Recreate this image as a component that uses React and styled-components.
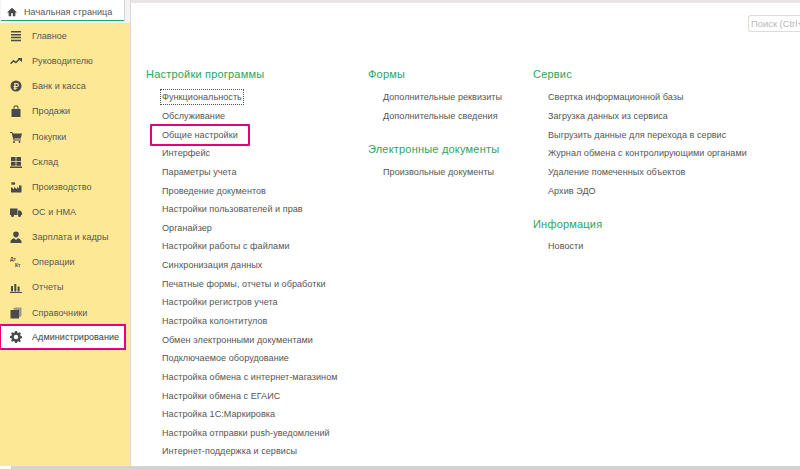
import React from "react";
import styled, { createGlobalStyle } from "styled-components";

const Global = createGlobalStyle`
  html, body { margin: 0; padding: 0; background: #fff; }
  body { width: 800px; height: 469px; overflow: hidden; font-family: "Liberation Sans", Arial, sans-serif; }
`;
const Page = styled.div`
  width: 800px; height: 469px; display: flex; flex-direction: column; overflow: hidden; background: #fff;
`;
const Body = styled.div`
  flex: 1; display: flex; min-height: 0;
`;
const LeftColumn = styled.div`
  width: 130px; flex: none; display: flex; flex-direction: column; border-right: 1px solid #d8d8d8;
`;
const TabBar = styled.div`
  height: 22.5px; flex: none; display: flex; background: #f3f3f3;
`;
const Tab = styled.div`
  width: 123px; height: 21px; box-sizing: border-box; flex: none; display: flex; align-items: center; gap: 7px; padding: 3px 0 0 6px;
  background: #fff; border-bottom: 1.5px solid #2fa55f; box-shadow: 1px 0 0 #d6d6d6; margin-left: 1px;
  font-size: 9.05px; letter-spacing: 0.05px; color: #555; white-space: nowrap;
`;
const Sidebar = styled.nav`
  flex: 1; background: #fde995; padding-top: 1px;
`;
const NavItem = styled.div`
  height: 25.15px; box-sizing: border-box; display: flex; align-items: center; padding-left: 10px; gap: 10px;
  font-size: 9.05px; letter-spacing: 0.05px; color: #555; white-space: nowrap;
  ${(p) => p.$active && `
    width: 125px; height: 23.5px; padding-top: 1px; margin-bottom: 2px; background: #fff; outline: 2px solid #e5007a; outline-offset: -1px; color: #3c3c3c;
  `}
`;
const IconBox = styled.svg`
  width: ${(p) => p.$size || 12}px; height: ${(p) => p.$size || 12}px; flex: none; fill: #4a4a4a;
`;
const Main = styled.main`
  flex: 1; min-width: 0; display: flex; flex-direction: column; border-top: 3px solid #e9e4e8;
`;
const SearchRow = styled.div`
  display: flex; justify-content: flex-end; padding-top: 12px; height: 17px; flex: none;
`;
const Search = styled.div`
  width: 52px; height: 17px; box-sizing: border-box; border: 1px solid #dcdcdc; border-right: none; border-radius: 3px 0 0 3px; padding-left: 2px;
  font-size: 9.4px; line-height: 15px; color: #b8b8b8; white-space: nowrap;
`;
const Columns = styled.div`
  display: flex; padding: 34px 0 0 15px;
`;
const Column = styled.section`
  width: ${(p) => p.$w}px; flex: none;
`;
const Heading = styled.h2`
  margin: ${(p) => p.$gap || 0}px 0 ${(p) => (p.$gap ? 5 : 6)}px; height: 16px; font-size: 11px; line-height: 16px; font-weight: 400; letter-spacing: 0.2px; color: #2ba45f; white-space: nowrap;
`;
const Links = styled.div`
  padding-left: ${(p) => p.$indent}px;
`;
const LinkRow = styled.div`
  height: 18.65px; display: flex; align-items: center;
`;
const LinkText = styled.span`
  font-size: 9.05px; line-height: 12px; letter-spacing: 0.05px; color: #555; white-space: nowrap;
  ${(p) => p.$focus && `outline: 1px dotted #555; outline-offset: 1px;`}
  ${(p) => p.$marked && `
    position: relative;
    &::after { content: ""; position: absolute; left: -12px; right: -12px; top: -5px; bottom: -5px; border: 2px solid #e5007a; border-radius: 1px; }
  `}
`;
const BottomBar = styled.div`
  height: 3px; flex: none; background: #d3d3d3; margin-left: 11px;
`;

const Icons = {
  home: <path d="M6 1 0 6.500h2V11h3V7.500h2V11h3V6.500h2z" />,
  menu: <path d="M1 1h10v1.500H1zM1 3.900h10v1.500H1zM1 6.800h10v1.500H1zM1 9.700h10v1.500H1z" />,
  trend: <g><path d="M.5 8.800 3.600 5.800l2.300 1.700 3.600-3.500" fill="none" stroke="#4a4a4a" strokeWidth="1.500" /><path d="M7.500 3H12v4.200z" /></g>,
  coin: <path fillRule="evenodd" d="M6 .5a5.500 5.500 0 1 0 0 11 5.500 5.500 0 0 0 0-11zM4.300 3h2.600a2 2 0 0 1 0 4H5.600v.8h1.600v1H5.600V10H4.300V8.800h-.8v-1h.8V7h-.8V6h.8zm1.300 1.100V6h1.200a.95.95 0 0 0 0-1.900z" />,
  bag: <path fillRule="evenodd" d="M1.500 4H3.500V2.800a2.500 2.500 0 0 1 5 0V4h2v8h-9zM4.500 4h3V2.800a1.500 1.500 0 0 0-3 0z" />,
  cart: <path d="M0 1h2.300l.6 1.500H12l-1.300 5H4.200l.3 1h6.300v1H3.600L1.600 2H0zM4 10a1 1 0 1 1 0 2 1 1 0 0 1 0-2zM9.500 10a1 1 0 1 1 0 2 1 1 0 0 1 0-2z" />,
  stock: <path d="M1 1h4.600v4H1zM6.400 1H11v4H6.400zM1 5.800h4.600v4H1zM6.400 5.800H11v4H6.400zM0 10.500h12V12H0z" />,
  factory: <path d="M1 11.500V6l3 2.200V6l3 2.200V6l2 1.500V4.500h2.500v7zM1.500 1l2 .5.800-.5 1 1.500-1 1.500-1.500-.5-1.300.5z" />,
  truck: <path d="M0 2.500h7.500v6.500H0zM8 4.500h2.300L12 6.500V9H8zM2.500 8a1.500 1.500 0 1 1 0 3 1.500 1.500 0 0 1 0-3zM9.500 8a1.500 1.500 0 1 1 0 3 1.500 1.500 0 0 1 0-3z" />,
  person: <path d="M6 .5a2.800 2.800 0 0 1 2.800 3c0 1.500-1.200 3-2.800 3s-2.800-1.500-2.800-3A2.800 2.800 0 0 1 6 .5zM.5 12V10.500c0-2 2.500-3 3.700-3.300L6 9l1.800-1.800c1.200.3 3.700 1.300 3.700 3.300V12z" />,
  report: <path d="M1 5h2v5.500H1zM4.300 3h2v7.500h-2zM7.600 5.500h2v5h-2zM0 11h12v1H0z" />,
  book: <g><path d="M3 1.500 5 .5h6.500v8L10 10.500z" fill="#9a9a9a" /><path d="M.5 3h8.500v8.500H.5z" /></g>,
  gear: <path fillRule="evenodd" d="M5 0h2l.3 1.600 1.100.5L9.800 1.200l1.200 1.200-.9 1.400.5 1.100 1.400.3v2l-1.600.3-.4 1.100.9 1.300-1.300 1.300-1.300-.9-1.100.5L7 12H5l-.3-1.600-1.100-.5-1.400.9-1.200-1.300.9-1.300-.5-1.100L0 7V5l1.400-.3.5-1.100L1 2.400 2.200 1.200l1.400.9 1.100-.5zM6 3.800a2.200 2.200 0 1 0 0 4.400 2.200 2.200 0 0 0 0-4.400z" />,
};
const Icon = ({ name, size }) => <IconBox $size={size} viewBox="0 0 12 12">{Icons[name]}</IconBox>;
const DtKtSvg = styled.svg`width: 12px; height: 12px; flex: none;`;
const DtKtLabel = styled.text`font-size: 5px; font-family: "Liberation Sans", sans-serif; font-weight: 700; fill: #4a4a4a;`;
const DtKt = () => (
  <DtKtSvg viewBox="0 0 12 12">
    <DtKtLabel x="0" y="5">Дт</DtKtLabel>
    <DtKtLabel x="5" y="11">Кт</DtKtLabel>
  </DtKtSvg>
);

const nav = [
  ["menu", "Главное"], ["trend", "Руководителю"], ["coin", "Банк и касса"], ["bag", "Продажи"], ["cart", "Покупки"],
  ["stock", "Склад"], ["factory", "Производство"], ["truck", "ОС и НМА"], ["person", "Зарплата и кадры"], ["dt", "Операции"],
  ["report", "Отчеты"], ["book", "Справочники"], ["gear", "Администрирование"],
];
const settings = [
  "Функциональность", "Обслуживание", "Общие настройки", "Интерфейс", "Параметры учета", "Проведение документов",
  "Настройки пользователей и прав", "Органайзер", "Настройки работы с файлами", "Синхронизация данных",
  "Печатные формы, отчеты и обработки", "Настройки регистров учета", "Настройка колонтитулов",
  "Обмен электронными документами", "Подключаемое оборудование", "Настройка обмена с интернет-магазином",
  "Настройки обмена с ЕГАИС", "Настройка 1С:Маркировка", "Настройка отправки push-уведомлений", "Интернет-поддержка и сервисы",
];
const List = ({ items, indent = 15 }) => (
  <Links $indent={indent}>
    {items.map((t) => (
      <LinkRow key={t}>
        <LinkText $focus={t === "Функциональность"} $marked={t === "Общие настройки"}>{t}</LinkText>
      </LinkRow>
    ))}
  </Links>
);

export default function App() {
  return (
    <Page>
      <Global />
      <Body>
        <LeftColumn>
          <TabBar>
            <Tab><Icon name="home" size={10} />Начальная страница</Tab>
          </TabBar>
          <Sidebar>
            {nav.map(([icon, label]) => (
              <NavItem key={label} $active={label === "Администрирование"}>
                {icon === "dt" ? <DtKt /> : <Icon name={icon} />}
                {label}
              </NavItem>
            ))}
          </Sidebar>
        </LeftColumn>
        <Main>
          <SearchRow><Search>Поиск (Ctrl+</Search></SearchRow>
          <Columns>
            <Column $w={222}>
              <Heading>Настройки программы</Heading>
              <List items={settings} indent={16} />
            </Column>
            <Column $w={165}>
              <Heading>Формы</Heading>
              <List items={["Дополнительные реквизиты", "Дополнительные сведения"]} />
              <Heading $gap={16}>Электронные документы</Heading>
              <List items={["Произвольные документы"]} />
            </Column>
            <Column $w={267}>
              <Heading>Сервис</Heading>
              <List items={[
                "Свертка информационной базы", "Загрузка данных из сервиса", "Выгрузить данные для перехода в сервис",
                "Журнал обмена с контролирующими органами", "Удаление помеченных объектов", "Архив ЭДО",
              ]} />
              <Heading $gap={16}>Информация</Heading>
              <List items={["Новости"]} />
            </Column>
          </Columns>
        </Main>
      </Body>
      <BottomBar />
    </Page>
  );
}
